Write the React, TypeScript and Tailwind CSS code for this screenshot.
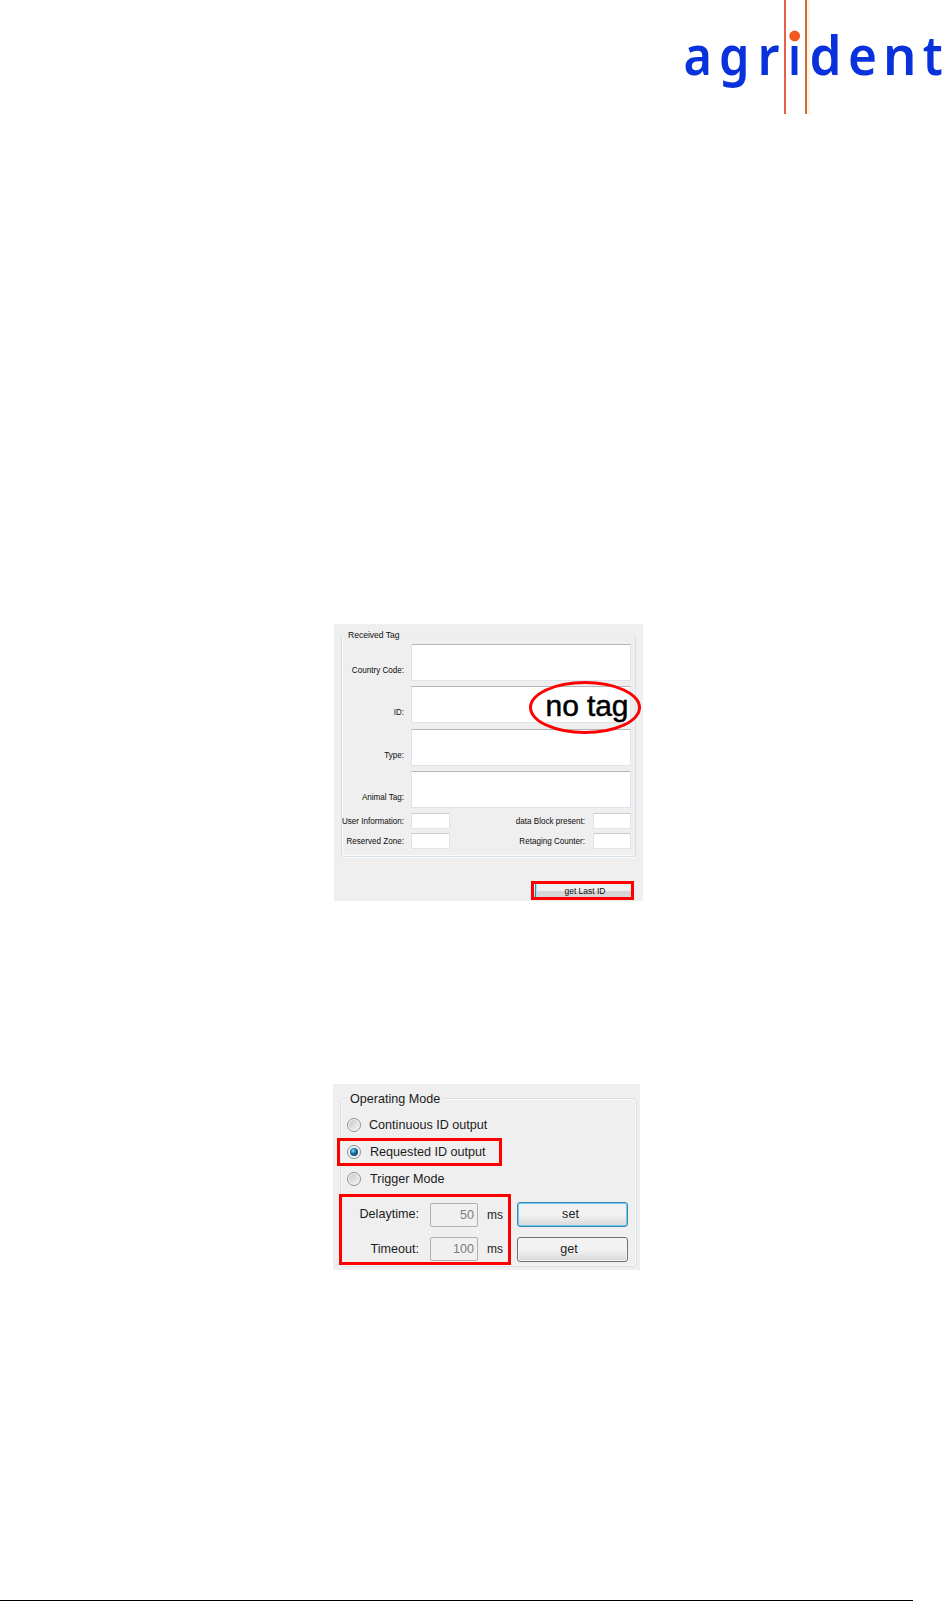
import type { ReactNode } from 'react'
import clsx from 'clsx'

const LETTERS = [
  { char: 'a', x: 683.5, width: 28.5 },
  { char: 'g', x: 719, width: 30.5 },
  { char: 'r', x: 757.5, width: 22 },
  { char: 'i', x: 788, width: 13 },
  { char: 'd', x: 809.5, width: 32 },
  { char: 'e', x: 848, width: 29 },
  { char: 'n', x: 883, width: 33.5 },
  { char: 't', x: 922.8, width: 20 },
]

const TAG_FIELDS = ['Country Code:', 'ID:', 'Type:', 'Animal Tag:']

const TAG_FLAGS = [
  ['User Information:', 'data Block present:'],
  ['Reserved Zone:', 'Retaging Counter:'],
]

const MODES = ['Continuous ID output', 'Requested ID output', 'Trigger Mode']

function Logo() {
  return (
    <svg className="block h-[120px] w-[943px]" viewBox="0 0 943 120" role="img" aria-label="agrident">
      <rect x="806" y="0" width="4" height="114" fill="#fdf8dc" />
      <rect x="784" y="0" width="2" height="114" fill="#e8604c" />
      <rect x="805" y="0" width="2" height="114" fill="#cc6b3d" />
      {LETTERS.map(l => (
        <text
          key={l.char}
          x={l.x}
          y="75"
          textLength={l.width}
          lengthAdjust="spacingAndGlyphs"
          fill="#0a32dc"
          className="font-['Noto_Sans',sans-serif] text-[55px] font-semibold"
        >
          {l.char}
        </text>
      ))}
      <rect x="787" y="28" width="16" height="16" fill="#fff" />
      <circle cx="794.7" cy="36" r="5.4" fill="#f4581a" />
    </svg>
  )
}

function Label({ children, className }: { children: ReactNode; className?: string }) {
  return (
    <span className={clsx('flex origin-right scale-x-[.88] justify-end whitespace-nowrap text-[9.2px] text-[#0c0c0c]', className)}>
      <span className="shrink-0">{children}</span>
    </span>
  )
}

function SmallBox({ className }: { className: string }) {
  return <div className={clsx('h-4 rounded-[1px] border border-[#dfe3eb] border-t-[#c9cbcf] bg-white', className)} />
}

function ReceivedTag() {
  return (
    <section className="relative ml-[334px] h-[277px] w-[309px] bg-[#efefef] pl-[7px] pt-[11px]">
      <div className="h-[222px] w-[295px] rounded-[3px] border border-[#d5dfe8] border-t-[#e9ebed] shadow-[inset_1px_-1px_0_#fbfbfb,0_1px_0_#fbfbfb]">
        <div className="-mt-[7px] ml-[3px] h-3 w-[58px] bg-[#efefef] pl-[3px]">
          <span className="block origin-left scale-x-[.93] whitespace-nowrap text-[9.2px] leading-3 text-[#0c0c0c]">Received Tag</span>
        </div>

        <div className="mt-[3px] flex flex-col gap-[5.3px]">
          {TAG_FIELDS.map(field => (
            <div key={field} className="flex gap-[7px]">
              <Label className="w-[62px] pt-5 leading-3">{field}</Label>
              <div className="h-[37px] w-[220px] rounded-[1px] border border-[#dfe3eb] border-t-[#b4b6ba] bg-white" />
            </div>
          ))}
        </div>

        <div className="mt-[5px] flex flex-col gap-1">
          {TAG_FLAGS.map(([left, right]) => (
            <div key={left} className="flex">
              <Label className="w-[62px] leading-4">{left}</Label>
              <SmallBox className="ml-[7px] w-[39px]" />
              <Label className="w-[135px] leading-4">{right}</Label>
              <SmallBox className="ml-2 w-[38px]" />
            </div>
          ))}
        </div>
      </div>

      <button className="ml-[190px] mt-6 flex h-[19px] w-[103px] border-[3px] border-[#fe0000] bg-linear-to-b from-[#f1f1f1] from-50% to-[#d6d6d6] to-50% pl-px">
        <span className="h-full w-px bg-[#3b86ad]" />
        <span className="h-full w-px bg-[#9be4fa]" />
        <span className="block w-full scale-x-[.92] pl-0.5 text-center text-[9.2px] leading-[15px] text-[#0c0c0c]">get Last ID</span>
      </button>

      <div className="absolute left-[195px] top-[57px] flex h-[53px] w-[112px] justify-center rounded-[50%] border-[3px] border-[#fe0000]">
        <span className="whitespace-nowrap pl-1 text-[30px] leading-[44px] tracking-[-0.1px] text-black [-webkit-text-stroke:0.5px_black]">no tag</span>
      </div>
    </section>
  )
}

function Radio({ checked }: { checked: boolean }) {
  return (
    <span className="flex size-[14px] items-center justify-center rounded-full border border-[#8e8f8f] bg-[#f4f4f4]">
      <span
        className={clsx(
          'rounded-full',
          checked
            ? 'size-2 bg-radial-[at_40%_35%] from-[#7fd0ee] from-5% via-[#15709f] via-40% to-[#0c2f4c]'
            : 'size-[10px] bg-linear-to-br from-[#c5c9ce] to-[#f4f4f4]'
        )}
      />
    </span>
  )
}

function DelayRow({ label, value, action, focused }: { label: string; value: string; action: string; focused?: boolean }) {
  return (
    <div className="flex h-[25px] items-center">
      <span className="w-[78px] text-right">{label}</span>
      <span className="ml-[11px] h-6 w-12 rounded-[2px] border border-[#b0b0b0] bg-[#f0f0f0] pr-[3px] text-right leading-[22px] text-[#7d7d7d]">
        {value}
      </span>
      <span className="ml-[9px] w-[17px] text-[12px]">ms</span>
      <button
        className={clsx(
          'ml-[13px] h-[25px] w-[111px] rounded-[3px] border bg-linear-to-b from-[#f2f2f2] from-50% to-[#d9d9d9] leading-[23px]',
          focused
            ? 'border-[#3f87ad] pr-1 shadow-[inset_0_0_0_1px_#65cdf3]'
            : 'border-[#707070] pr-[7px] shadow-[inset_0_0_0_1px_#f6f6f6]'
        )}
      >
        {action}
      </button>
    </div>
  )
}

function OperatingMode() {
  return (
    <section className="relative ml-[333px] h-[186px] w-[307px] bg-[#efefef] pl-[7px] pt-[14px] text-[12.6px] text-[#1c1c1c]">
      <div className="h-[169px] w-[297px] rounded-[4px] border border-[#d6e0e8] shadow-[inset_1px_1px_0_#f8f8f8,inset_-1px_-1px_0_#f8f8f8]">
        <div className="-mt-[8px] ml-[5px] h-4 w-[97px] whitespace-nowrap bg-[#efefef] pl-1 leading-4">Operating Mode</div>

        <div className="mt-[10px] flex flex-col gap-[11px] pl-[6px]">
          {MODES.map((mode, i) => (
            <div key={mode} className="flex h-4 items-center leading-4">
              <Radio checked={i === 1} />
              <span className={i === 0 ? 'ml-2' : 'ml-[9px]'}>{mode}</span>
            </div>
          ))}
        </div>

        <div className="mt-[15px] flex flex-col gap-[9.5px]">
          <DelayRow label="Delaytime:" value="50" action="set" focused />
          <DelayRow label="Timeout:" value="100" action="get" />
        </div>
      </div>

      <div className="absolute left-1 top-[54px] h-7 w-[165px] border-[3px] border-[#fe0000]" />
      <div className="absolute left-[6px] top-[110px] h-[71px] w-[172px] border-[3px] border-[#fe0000]" />
    </section>
  )
}

export default function App() {
  return (
    <main className="flex h-[1601px] w-[943px] flex-col overflow-hidden bg-white font-['Liberation_Sans',Arial,sans-serif]">
      <Logo />
      <div className="mt-[504px]">
        <ReceivedTag />
      </div>
      <div className="mt-[183px]">
        <OperatingMode />
      </div>
      <div className="mb-0 mt-auto h-px w-[913px] bg-black" />
    </main>
  )
}
